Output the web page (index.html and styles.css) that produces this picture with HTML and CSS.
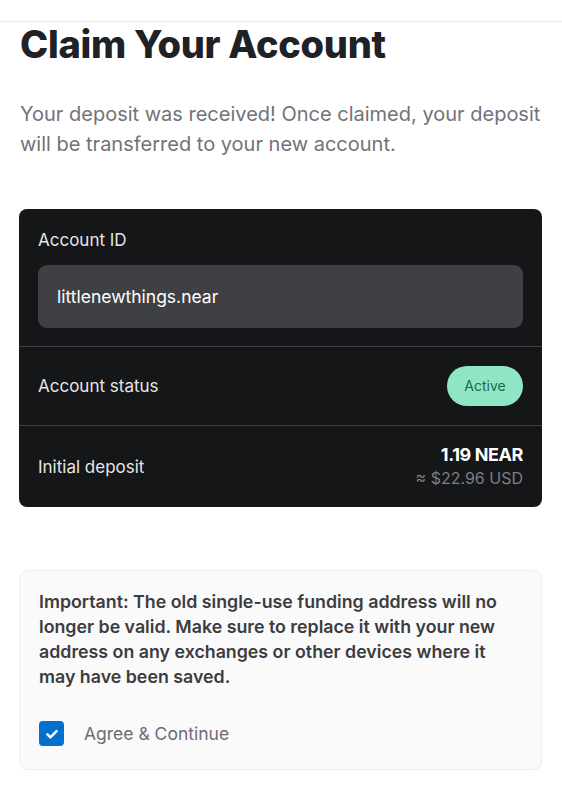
FILE: index.html
```html
<!DOCTYPE html>
<html lang="en">
<head>
    <meta charset="UTF-8">
    <meta name="viewport" content="width=device-width, initial-scale=1.0">
    <title>Claim Your Account</title>
    <link rel="stylesheet" href="styles.css">
</head>
<body>
    <div class="topbar"></div>

    <main class="claim">
        <h1>Claim Your Account</h1>
        <p class="intro">Your deposit was received! Once claimed, your deposit will be transferred to your new account.</p>

        <div class="account-card">
            <div class="row row-id">
                <span class="label">Account ID</span>
                <div class="account-input">littlenewthings.near</div>
            </div>
            <div class="row">
                <span class="label">Account status</span>
                <span class="badge">Active</span>
            </div>
            <div class="row row-deposit">
                <span class="label">Initial deposit</span>
                <div class="amount">
                    <span class="near">1.19 NEAR</span>
                    <span class="usd">≈ $22.96 USD</span>
                </div>
            </div>
        </div>

        <div class="notice">
            <p>Important: The old single-use funding address will no longer be valid. Make sure to replace it with your new address on any exchanges or other devices where it may have been saved.</p>
            <label class="agree">
                <span class="checkbox">
                    <svg width="16" height="16" viewBox="0 0 14 14"><path d="M3 7.3l2.6 2.6L11 4.4" fill="none" stroke="#fff" stroke-width="2.2" stroke-linecap="round" stroke-linejoin="round"/></svg>
                </span>
                Agree &amp; Continue
            </label>
        </div>
    </main>
</body>
</html>
```

FILE: styles.css
```css
body {
    margin: 0;
    font-family: Inter, "Noto Sans", sans-serif;
    background-color: #fff;
    color: #25272a;
}

.topbar {
    height: 21px;
    border-bottom: 1px solid #ececec;
}

.claim {
    padding: 0 20px 0 19px;
}

h1 {
    margin: 0 0 0 1px;
    font-size: 38px;
    font-weight: 800;
    letter-spacing: -0.3px;
    color: #202124;
    line-height: 44px;
}

.intro {
    margin: 33px 0 0 1px;
    font-size: 20px;
    line-height: 30px;
    color: #72727a;
}

.account-card {
    margin-top: 50px;
    background-color: #141618;
    border-radius: 8px;
    color: #e6e6e6;
}

.row {
    display: flex;
    justify-content: space-between;
    align-items: center;
    padding: 0 19px;
    height: 78px;
    border-top: 1px solid #3d4044;
    font-size: 17px;
}

.row:first-child {
    border-top: none;
}

.row-id {
    flex-direction: column;
    align-items: stretch;
    height: auto;
    padding-top: 20px;
    padding-bottom: 18px;
}

.row-id .label {
    line-height: 22px;
}

.account-input {
    margin-top: 14px;
    height: 63px;
    line-height: 63px;
    padding: 0 19px;
    background-color: #3f4044;
    border-radius: 9px;
    color: #fff;
    font-size: 17.5px;
}

.row-deposit {
    height: 81px;
}

.badge {
    background-color: #8fe6c4;
    color: #1b6b4b;
    font-size: 14px;
    width: 76px;
    height: 40px;
    line-height: 40px;
    text-align: center;
    border-radius: 20px;
}

.amount {
    display: flex;
    flex-direction: column;
    align-items: flex-end;
}

.near {
    font-size: 18px;
    font-weight: 700;
    color: #fff;
    line-height: 23px;
    letter-spacing: -0.4px;
}

.usd {
    font-size: 16px;
    color: #7c7f84;
    line-height: 24px;
}

.notice {
    margin-top: 63px;
    background-color: #fafafa;
    border: 1px solid #efefef;
    border-radius: 8px;
    padding: 18px 19px 23px 19px;
}

.notice p {
    margin: 0;
    font-size: 17.8px;
    line-height: 25px;
    font-weight: 600;
    color: #3c3c40;
}

.agree {
    display: flex;
    align-items: center;
    margin-top: 32px;
    font-size: 17.5px;
    color: #6c6c72;
}

.checkbox {
    width: 25px;
    height: 25px;
    border-radius: 4px;
    background-color: #0072ce;
    display: flex;
    align-items: center;
    justify-content: center;
    margin-right: 20px;
}
```
